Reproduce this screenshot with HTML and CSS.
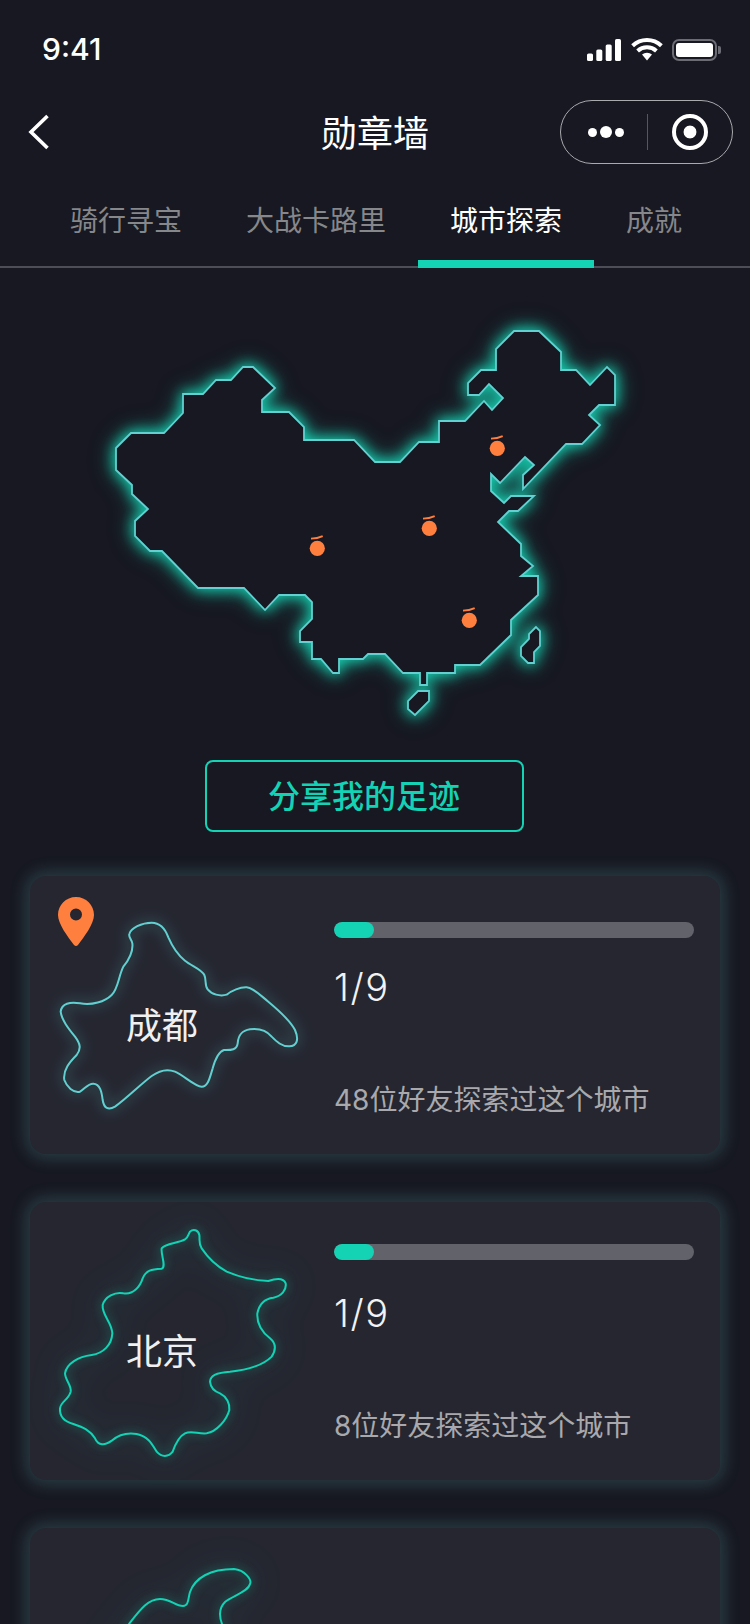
FILE: index.html
```html
<!DOCTYPE html>
<html lang="zh-CN">
<head>
    <meta charset="UTF-8">
    <meta name="viewport" content="width=device-width, initial-scale=1.0">
    <title>勋章墙</title>
    <link rel="stylesheet" href="styles.css">
</head>
<body>
    <div class="status-bar">
        <span class="status-time">9:41</span>
        <div class="status-icons">
            <svg class="icon-signal" width="34" height="22" viewBox="0 0 34 22">
                <rect x="0" y="14.5" width="6" height="7.5" rx="1.6"/>
                <rect x="9.3" y="10.5" width="6" height="11.5" rx="1.6"/>
                <rect x="18.7" y="5.5" width="6" height="16.5" rx="1.6"/>
                <rect x="28" y="0" width="6" height="22" rx="1.6"/>
            </svg>
            <svg class="icon-wifi" width="32" height="23" viewBox="0 0 32 23">
                <path d="M1.6 7.8 A21 21 0 0 1 30.4 7.8" />
                <path d="M6.6 13 A14 14 0 0 1 25.4 13" />
                <path class="wifi-dot" d="M11 16.6 A7.4 7.4 0 0 1 21 16.6 L16 22.6 Z"/>
            </svg>
            <div class="battery">
                <div class="battery-level"></div>
            </div>
            <div class="battery-nub"></div>
        </div>
    </div>

    <div class="nav-bar">
        <svg class="nav-back" width="22" height="36" viewBox="0 0 22 36">
            <polyline points="19.5,2 3,18 19.5,34"/>
        </svg>
        <h1 class="nav-title">勋章墙</h1>
        <div class="capsule">
            <div class="capsule-dots">
                <span class="dot"></span>
                <span class="dot dot-big"></span>
                <span class="dot"></span>
            </div>
            <div class="capsule-line"></div>
            <div class="capsule-target"></div>
        </div>
    </div>

    <div class="tabs">
        <div class="tab">骑行寻宝</div>
        <div class="tab">大战卡路里</div>
        <div class="tab active">城市探索</div>
        <div class="tab">成就</div>
    </div>

    <svg class="china-map" width="750" height="492" viewBox="0 268 750 492">
        <defs>
            <g id="marker">
                <circle cx="0" cy="0" r="7.6"/>
                <path d="M-6.3 -9.6 Q0 -9.8 5.4 -12.2"/>
            </g>
        </defs>
        <g class="map-land">
            <polygon points="116,448 131,433 164,433 183,413 183,394 203,394 216,380 231,380 243,367 253,367 275,388 262,400 262,412 289,412 304,427 304,440 354,440 375,462 400,462 419,442 439,442 439,421 465,421 484,401 492,410 503,398 489,384 479,395 468,395 468,383 481,370 496,370 496,349 514,331 539,331 561,352 561,370 576,370 590,385 607,367 615,375 615,405 599,405 589,415 600,425 582,444 566,444 523,489 523,475 534,465 525,457 500,483 491,474 491,491 504,503 511,496 534,496 518,511 509,511 498,522 521,544 521,556 533,566 521,576 538,576 538,595 511,620 511,635 480,665 455,665 455,673 427,673 427,685 420,685 420,673 403,673 385,654 368,654 363,659 339,659 339,673 333,673 321,659 312,659 312,642 300,642 300,631 312,619 312,602 305,595 279,595 265,610 244,588 198,588 162,551 150,551 135,536 135,521 148,509 132,494 132,485 116,470"/>
            <polygon points="429,691 418,691 408,701 408,709 415,715 429,701"/>
            <polygon points="536,627 529,634 529,639 521,647 521,656 528,663 534,663 534,652 540,646 540,631"/>
        </g>
        <use class="map-marker" href="#marker" x="317.3" y="548.3"/>
        <use class="map-marker" href="#marker" x="429.3" y="528.3"/>
        <use class="map-marker" href="#marker" x="497.3" y="448.3"/>
        <use class="map-marker" href="#marker" x="469.3" y="620.3"/>
    </svg>

    <div class="share-wrap">
        <button class="share-btn">分享我的足迹</button>
    </div>

    <div class="card-list">
        <div class="card">
            <div class="card-map">
                <svg class="city-shape city-blue" width="274" height="278" viewBox="30 48 822 834">
                    <path d="M328 222 C332 205 365 188 395 188 C425 188 437 210 445 232 C458 262 470 282 495 302 C515 318 545 328 553 345 C560 360 553 375 563 388 C575 403 600 410 620 404 C635 392 660 381 680 382 C700 384 720 405 745 425 C775 450 810 480 825 510 C838 540 830 558 808 559 C785 560 770 545 755 530 C740 512 715 505 690 508 C665 512 655 525 653 550 C650 572 630 570 612 570 C595 575 585 600 578 625 C570 650 565 680 545 680 C525 680 490 645 465 635 C440 625 420 630 395 648 C365 670 320 715 285 740 C265 752 252 745 248 720 C245 695 240 672 220 671 C205 670 195 685 180 695 C160 700 140 680 133 660 C128 630 150 605 170 585 C185 565 180 550 165 530 C145 505 125 480 122 455 C125 430 150 425 180 430 C215 437 255 425 275 405 C295 385 295 350 310 320 C330 295 340 275 337 250 C335 238 325 232 328 222 Z"/>
                </svg>
                <svg class="card-pin" width="36" height="49" viewBox="0 0 36 49">
                    <path fill-rule="evenodd" d="M18 0 C28 0 36 8 36 18 C36 27 26 40 20 48 Q18 50 16 48 C10 40 0 27 0 18 C0 8 8 0 18 0 Z M18 11.5 A6 6 0 1 0 18 23.5 A6 6 0 1 0 18 11.5 Z"/>
                </svg>
                <div class="city-name">成都</div>
            </div>
            <div class="card-info">
                <div class="bar"><div class="bar-fill" style="width: 11.11%"></div></div>
                <div class="count">1/9</div>
                <div class="friends">48位好友探索过这个城市</div>
            </div>
        </div>

        <div class="card">
            <div class="card-map">
                <svg class="city-shape city-green" width="274" height="278" viewBox="30 36 822 834">
                    <path d="M510 125 C520 115 535 120 538 135 C540 150 535 160 545 175 C565 205 590 228 620 245 C660 262 705 272 745 273 C765 266 790 262 797 280 C800 300 785 318 760 323 C735 326 718 340 712 370 C710 400 725 425 750 445 C768 460 768 480 755 500 C730 525 680 540 630 545 C595 547 570 555 570 575 C572 595 585 605 600 610 C620 620 630 640 628 660 C620 690 590 725 560 730 C535 733 515 720 495 730 C475 740 465 765 458 785 C445 802 425 802 410 785 C395 760 385 740 350 732 C320 727 295 735 275 752 C255 767 235 768 225 745 C210 720 190 712 160 702 C135 695 118 680 120 655 C122 635 145 630 152 605 C155 585 135 570 135 550 C140 520 175 500 215 495 C250 490 275 465 277 430 C275 395 245 375 248 345 C255 320 285 305 310 310 C340 315 360 290 368 265 C378 240 395 238 425 236 C440 230 422 195 425 175 C435 160 475 160 495 148 C505 142 505 132 510 125 Z"/>
                </svg>
                <div class="city-name">北京</div>
            </div>
            <div class="card-info card-info-b">
                <div class="bar"><div class="bar-fill" style="width: 11.11%"></div></div>
                <div class="count">1/9</div>
                <div class="friends">8位好友探索过这个城市</div>
            </div>
        </div>

        <div class="card">
            <div class="card-map">
                <svg class="city-shape city-green" width="274" height="278" viewBox="30 1528 274 278">
                    <path d="M60 1740 C80 1680 110 1650 129 1624 C140 1610 148 1599 160 1599 C171 1599 175 1606 183 1606 C189 1606 188 1598 190 1592 C195 1578 210 1569 234 1569 C245 1570 252 1580 250 1584 C248 1592 232 1596 225 1602 C219 1608 219 1616 222 1624 C232 1660 240 1700 200 1760 C150 1790 80 1790 60 1740 Z"/>
                </svg>
            </div>
            <div class="card-info card-info-c">
                <div class="count">1/9</div>
            </div>
        </div>
    </div>
</body>
</html>
```

FILE: styles.css
```css
* {
    margin: 0;
    padding: 0;
    box-sizing: border-box;
}

html, body {
    width: 750px;
    height: 1624px;
    overflow: hidden;
}

body {
    font-family: "Noto Sans CJK SC", "Noto Sans", sans-serif;
    background: #171821;
    color: #fff;
}

/* status bar */
.status-bar {
    height: 88px;
    padding: 27px 29px 0 42px;
    display: flex;
    justify-content: space-between;
    align-items: flex-start;
}

.status-time {
    font-family: Inter, sans-serif;
    font-size: 30px;
    font-weight: 500;
    line-height: 44px;
}

.status-icons {
    display: flex;
    align-items: center;
    margin-top: 11px;
}

.icon-signal {
    fill: #fff;
    margin-right: 10px;
}

.icon-wifi {
    fill: none;
    stroke: #fff;
    stroke-width: 4;
    margin-right: 9px;
}

.icon-wifi .wifi-dot {
    fill: #fff;
    stroke: none;
}

.battery {
    width: 45px;
    height: 22px;
    border: 2px solid #6b6c74;
    border-radius: 7px;
    padding: 2px;
}

.battery-level {
    height: 100%;
    background: #fff;
    border-radius: 3px;
}

.battery-nub {
    width: 3px;
    height: 8px;
    background: #6b6c74;
    border-radius: 0 2px 2px 0;
    margin-left: 1px;
}

/* nav */
.nav-bar {
    height: 88px;
    padding: 0 17px;
    display: grid;
    grid-template-columns: 1fr auto 1fr;
    align-items: center;
}

.nav-back {
    fill: none;
    stroke: #fff;
    stroke-width: 3.6;
    margin-left: 11px;
}

.nav-title {
    font-size: 36px;
    font-weight: 400;
    line-height: 50px;
    margin-top: -2px;
}

.capsule {
    justify-self: end;
    width: 173px;
    height: 64px;
    border: 1px solid #a9aaae;
    border-radius: 32px;
    display: flex;
    align-items: center;
    padding-left: 27px;
}

.capsule-dots {
    width: 36px;
    display: flex;
    align-items: center;
    justify-content: space-between;
}

.dot {
    width: 9px;
    height: 9px;
    border-radius: 50%;
    background: #fff;
}

.dot-big {
    width: 12px;
    height: 12px;
}

.capsule-line {
    width: 1px;
    height: 36px;
    background: #55565e;
    margin-left: 23px;
}

.capsule-target {
    width: 36px;
    height: 36px;
    margin-left: 24px;
    border: 4.5px solid #fff;
    border-radius: 50%;
    background: radial-gradient(circle, #fff 0, #fff 6px, transparent 6.8px);
}

/* tabs */
.tabs {
    height: 92px;
    padding-left: 38px;
    border-bottom: 2px solid #4c4d56;
    display: flex;
    align-items: center;
}

.tab {
    padding: 0 32px;
    font-size: 28px;
    line-height: 40px;
    color: #86878b;
    position: relative;
    top: -2px;
}

.tab.active {
    color: #fff;
}

.tab.active::after {
    content: "";
    position: absolute;
    left: 0;
    right: 0;
    bottom: -29px;
    height: 8px;
    background: #14d2b4;
}

/* map */
.china-map {
    display: block;
    overflow: visible;
}

.map-land {
    filter: drop-shadow(0 0 7px rgba(22, 212, 180, 0.95)) drop-shadow(0 0 9px rgba(22, 212, 180, 0.55));
}

.map-land polygon {
    fill: #171821;
    stroke: #62d0d0;
    stroke-width: 1.8;
}

.map-marker {
    fill: #ff7f3f;
    stroke: none;
}

#marker path {
    fill: none;
    stroke: #ff7f3f;
    stroke-width: 1.8;
}

.share-wrap {
    display: flex;
    justify-content: center;
    padding-right: 22px;
}

.share-btn {
    width: 319px;
    height: 72px;
    padding-bottom: 5px;
    background: none;
    border: 2px solid #14d2b4;
    border-radius: 8px;
    color: #14d2b4;
    font-family: inherit;
    font-size: 32px;
    font-weight: 500;
}

/* city cards */
.card-list {
    padding: 44px 30px 0;
}

.card {
    height: 278px;
    margin-bottom: 48px;
    background: #252630;
    border-radius: 16px;
    box-shadow: 0 0 16px 5px rgba(120, 220, 220, 0.18);
    display: flex;
}

.card-map {
    width: 304px;
    flex-shrink: 0;
    position: relative;
}

.city-shape {
    display: block;
    fill: none;
}

.city-shape path {
    vector-effect: non-scaling-stroke;
    stroke-width: 2;
}

.city-blue {
    stroke: #62d0d0;
    filter: drop-shadow(0 0 7px rgba(98, 208, 208, 0.75));
}

.city-green {
    stroke: #14d2b4;
    filter: drop-shadow(0 0 5px rgba(22, 212, 180, 0.55)) drop-shadow(0 0 16px rgba(22, 212, 180, 0.35));
}

.card-pin {
    position: absolute;
    left: 28px;
    top: 21px;
    fill: #ff7f3f;
}

.city-name {
    position: absolute;
    left: 0;
    top: 122px;
    width: 264px;
    text-align: center;
    font-size: 36px;
    line-height: 50px;
    color: #f0f0f0;
}

.card-info {
    flex-grow: 1;
    padding: 46px 26px 0 0;
}

.bar {
    height: 16px;
    background: #62626b;
    border-radius: 8px;
    overflow: hidden;
}

.bar-fill {
    height: 100%;
    background: #14d2b4;
    border-radius: 8px;
}

.count {
    font-family: Inter, sans-serif;
    font-size: 38px;
    font-weight: 300;
    letter-spacing: 1.5px;
    line-height: 44px;
    margin-top: 27px;
    color: #f2f2f2;
}

.friends {
    font-family: Inter, "Noto Sans CJK SC", sans-serif;
    font-size: 28px;
    line-height: 40px;
    margin-top: 71px;
    color: #a9a9ad;
}

.card-info-b {
    padding-top: 42px;
}

.card-info-b .count {
    margin-top: 31px;
}

.card-info-c {
    padding-top: 62px;
}
```
